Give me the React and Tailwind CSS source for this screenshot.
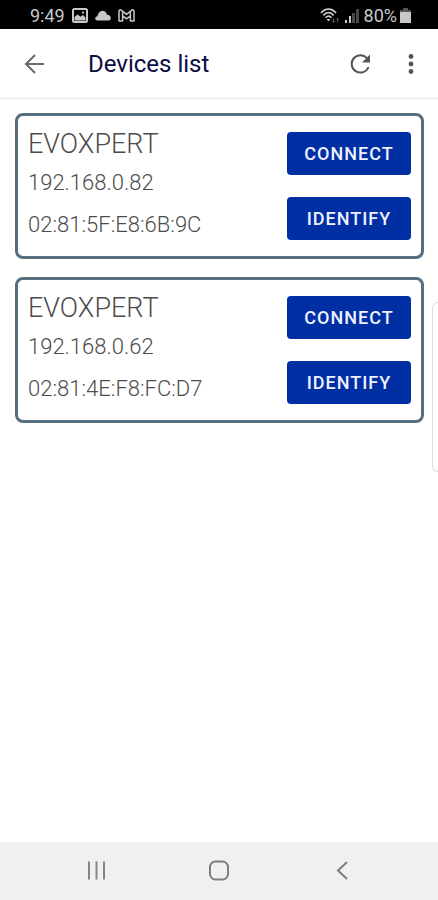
import { useState } from "react";

const DEVICES = [
    { name: "EVOXPERT", ip: "192.168.0.82", mac: "02:81:5F:E8:6B:9C" },
    { name: "EVOXPERT", ip: "192.168.0.62", mac: "02:81:4E:F8:FC:D7" }
];

const StatusBar = () => (
    <div className="flex h-[29px] shrink-0 items-center justify-between bg-black pl-[30px] pr-[27px] pt-[2px] text-[18px] leading-[22px] text-[#c8c8c8]">
        <div className="flex items-center gap-[7px]">
            <span>9:49</span>
            <svg width="16" height="15" viewBox="0 0 16 15" fill="none" aria-hidden="true">
                <rect x="1" y="1" width="14" height="13" rx="1.5" stroke="#c8c8c8" strokeWidth="2" />
                <path d="M2.5 12.5V9l3-2.6 3 2.4L11 7l2.5 2.5v3z" fill="#c8c8c8" />
                <circle cx="11" cy="4.6" r="1.1" fill="#c8c8c8" />
            </svg>
            <svg width="16" height="11" viewBox="0 0 16 11" fill="#c8c8c8" aria-hidden="true">
                <path d="M2.5 10.5C1 10.5.2 9.6.2 8.5c0-1.2.8-2 2.2-2.200C3.200 3 5 .8 7.500.8c2.200 0 3.800 1.600 4.500 4 2.200.2 3.800 1.400 3.800 3.100 0 1.600-1.200 2.600-3 2.600z" />
            </svg>
            <svg width="17" height="13" viewBox="0 0 17 13" fill="none" stroke="#c8c8c8" strokeWidth="1.5" strokeLinejoin="round" aria-hidden="true">
                <path d="M1 12V2.300C1 .8 2.500.5 3.500 1.300l5 4 5-4c1-.8 2.500-.5 2.500 1V12h-3.600V6.800L8.500 9.800 4.600 6.800V12z" />
                <path d="M4.600 2.500v4.300M12.400 2.500v4.300" />
            </svg>
        </div>
        <div className="flex items-center gap-[5px]">
            <svg width="20" height="16" viewBox="0 0 20 16" fill="none" aria-hidden="true">
                <path d="M1 5C5-.2 12-.2 16 5M3.300 7.300c3-3.500 7.400-3.500 10.400 0M5.700 9.600c1.700-1.900 4-1.900 5.700 0" stroke="#c8c8c8" strokeWidth="1.800" />
                <path d="M6.500 11h4l-2 2.600z" fill="#c8c8c8" />
                <path d="M13.500 14.500V10m-1.500 2.500 1.500 2 1.500-2M17.500 10v4.500m-1.500-3 1.500-1.500 1.500 1.500" stroke="#555" />
            </svg>
            <svg width="14" height="14" viewBox="0 0 14 14" aria-hidden="true">
                <path d="M0 11h2v3H0zM4 7h2v7H4z" fill="#c8c8c8" />
                <path d="M7 4h3v10H7zM11 0h3v14h-3z" fill="#484848" />
            </svg>
            <div className="flex items-center gap-[3px]">
                <span>80%</span>
                <svg width="11" height="15" viewBox="0 0 11 15" aria-hidden="true">
                    <path d="M3 0h5v2h3v3H0V2h3z" fill="#555" />
                    <path d="M0 4h11v11H0z" fill="#c8c8c8" />
                </svg>
            </div>
        </div>
    </div>
);

const Header = ({ onRefresh }) => (
    <header className="flex h-[71px] shrink-0 items-center border-b-3 border-[#f5f5f5] pl-[23px] pr-[15px] pt-[2px]">
        <button aria-label="Back">
            <svg width="24" height="24" viewBox="0 0 24 24" fill="none" stroke="#6b6b6b" strokeWidth="2" aria-hidden="true">
                <path d="M21 12H4M12 3l-9 9 9 9" />
            </svg>
        </button>
        <h1 className="ml-[41px] flex-1 text-[24px] leading-[30px] text-[#0c0c44]">Devices list</h1>
        <button aria-label="Refresh" onClick={onRefresh}>
            <svg width="24" height="24" viewBox="0 0 24 24" fill="none" aria-hidden="true">
                <path d="M20.500 15A8.700 8.700 0 1 1 19 6.200" stroke="#555" strokeWidth="2" />
                <path d="M22 2.500v8h-8z" fill="#555" />
            </svg>
        </button>
        <button aria-label="More options" className="ml-[27px]">
            <svg width="24" height="24" viewBox="0 0 24 24" fill="#555" aria-hidden="true">
                <circle cx="12" cy="4.500" r="2.400" />
                <circle cx="12" cy="12" r="2.400" />
                <circle cx="12" cy="19.500" r="2.400" />
            </svg>
        </button>
    </header>
);

const ActionButton = ({ children }) => (
    <button className="h-[43px] w-full rounded-[4px] bg-[#002fa4] text-[18px] font-medium tracking-[1px] text-[#eef1ff]">
        {children}
    </button>
);

const DeviceCard = ({ device }) => (
    <li className="flex justify-between rounded-[8px] border-3 border-[#566f7c] px-[10px] pb-[16px] pt-[12px]">
        <div className="font-light text-[#4c4c4c]">
            <h2 className="text-[27px] leading-[32px]">{device.name}</h2>
            <p className="mt-[10px] text-[22px] leading-[26px]">{device.ip}</p>
            <p className="mt-[16px] text-[22px] leading-[26px]">{device.mac}</p>
        </div>
        <div className="mt-[4px] flex w-[124px] flex-col gap-[22px]">
            <ActionButton>CONNECT</ActionButton>
            <ActionButton>IDENTIFY</ActionButton>
        </div>
    </li>
);

const NavBar = () => (
    <nav className="flex h-[58px] shrink-0 items-center justify-between bg-[#f0f0f0] px-[84px]">
        <button aria-label="Recent apps">
            <svg width="24" height="24" viewBox="0 0 24 24" stroke="#858585" strokeWidth="2" aria-hidden="true">
                <path d="M5 2.500v18M12.500 2.500v18M20 2.500v18" />
            </svg>
        </button>
        <button aria-label="Home">
            <svg width="24" height="24" viewBox="0 0 24 24" fill="none" stroke="#7d7d7d" strokeWidth="2" aria-hidden="true">
                <rect x="3" y="2.500" width="18" height="18" rx="5.500" />
            </svg>
        </button>
        <button aria-label="Go back">
            <svg width="24" height="24" viewBox="0 0 24 24" fill="none" stroke="#7d7d7d" strokeWidth="2" aria-hidden="true">
                <path d="M17 3 8 11.500l9 8.500" />
            </svg>
        </button>
    </nav>
);

const App = () => {
    const [devices, setDevices] = useState(DEVICES);

    return (
        <div className="relative flex min-h-screen flex-col overflow-hidden bg-white font-[Roboto,sans-serif]">
            <StatusBar />
            <Header onRefresh={() => setDevices([...DEVICES])} />
            <main className="flex-1 py-[13px] pl-[15px] pr-[14px]">
                <ul className="flex flex-col gap-[18px]">
                    {devices.map((device) => <DeviceCard key={device.mac} device={device} />)}
                </ul>
            </main>
            {/* edge panel handle */}
            <div className="absolute right-0 top-[302px] h-[170px] w-[6px] rounded-l-[6px] border border-r-0 border-[#ddd] bg-white" />
            <NavBar />
        </div>
    );
};

export default App;
